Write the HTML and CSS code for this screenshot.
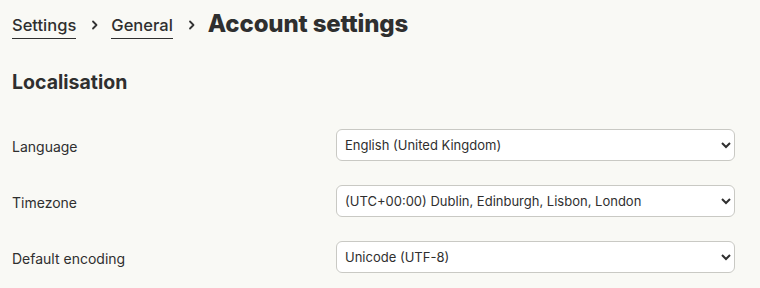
FILE: index.html
```html
<!DOCTYPE html>
<html lang="en">
<head>
<meta charset="utf-8">
<title>Account settings</title>
<link rel="stylesheet" href="styles.css">
</head>
<body>
<header class="crumbs">
  <a class="crumb" href="#">Settings</a>
  <svg class="sep" width="10" height="10" viewBox="0 0 10 10"><path d="M3 1.5 L6.5 5 L3 8.5" fill="none" stroke="#333" stroke-width="1.8" stroke-linecap="round" stroke-linejoin="round"/></svg>
  <a class="crumb" href="#">General</a>
  <svg class="sep" width="10" height="10" viewBox="0 0 10 10"><path d="M3 1.5 L6.5 5 L3 8.5" fill="none" stroke="#333" stroke-width="1.8" stroke-linecap="round" stroke-linejoin="round"/></svg>
  <h1 class="title">Account settings</h1>
</header>
<section class="section">
  <h2 class="section-title">Localisation</h2>
  <div class="form">
    <label class="label" for="lang">Language</label>
    <select class="select" id="lang"><option>English (United Kingdom)</option></select>
    <label class="label" for="tz">Timezone</label>
    <select class="select" id="tz"><option>(UTC+00:00) Dublin, Edinburgh, Lisbon, London</option></select>
    <label class="label" for="enc">Default encoding</label>
    <select class="select" id="enc"><option>Unicode (UTF-8)</option></select>
  </div>
</section>
</body>
</html>
```
FILE: styles.css
```css
html, body {
  margin: 0;
  background: #f9f9f5;
  color: #2f2f2f;
  font-family: Inter, "Noto Sans", sans-serif;
}
body {
  padding: 0 12px;
}
.crumbs {
  display: flex;
  align-items: center;
  height: 44px;
  padding-top: 3px;
}
.crumb {
  color: #2f2f2f;
  text-decoration: none;
  font-size: 16.5px;
  font-weight: 550;
  line-height: 20px;
  padding-top: 4px;
  padding-bottom: 3px;
  border-bottom: 1.5px solid #2f2f2f;
}
.sep {
  margin: 0 11px 0 14px;
}
.title {
  margin: 0;
  font-size: 24px;
  font-weight: 800;
  letter-spacing: -0.15px;
  line-height: 30px;
  padding-bottom: 2px;
}
.section-title {
  margin: 22px 0 0;
  font-size: 19.5px;
  font-weight: 700;
  line-height: 26px;
}
.form {
  display: grid;
  grid-template-columns: 324px 399px;
  row-gap: 24px;
  align-items: center;
  margin-top: 34px;
}
.label {
  font-size: 14px;
  line-height: 20px;
  padding-top: 4px;
}
.select {
  height: 32px;
  width: 399px;
  font-family: Inter, "Noto Sans", sans-serif;
  font-size: 13px;
  color: #2f2f2f;
  background: #fff;
  border: 1px solid #c9c9c4;
  border-radius: 6px;
  padding: 0 4px;
}
```
